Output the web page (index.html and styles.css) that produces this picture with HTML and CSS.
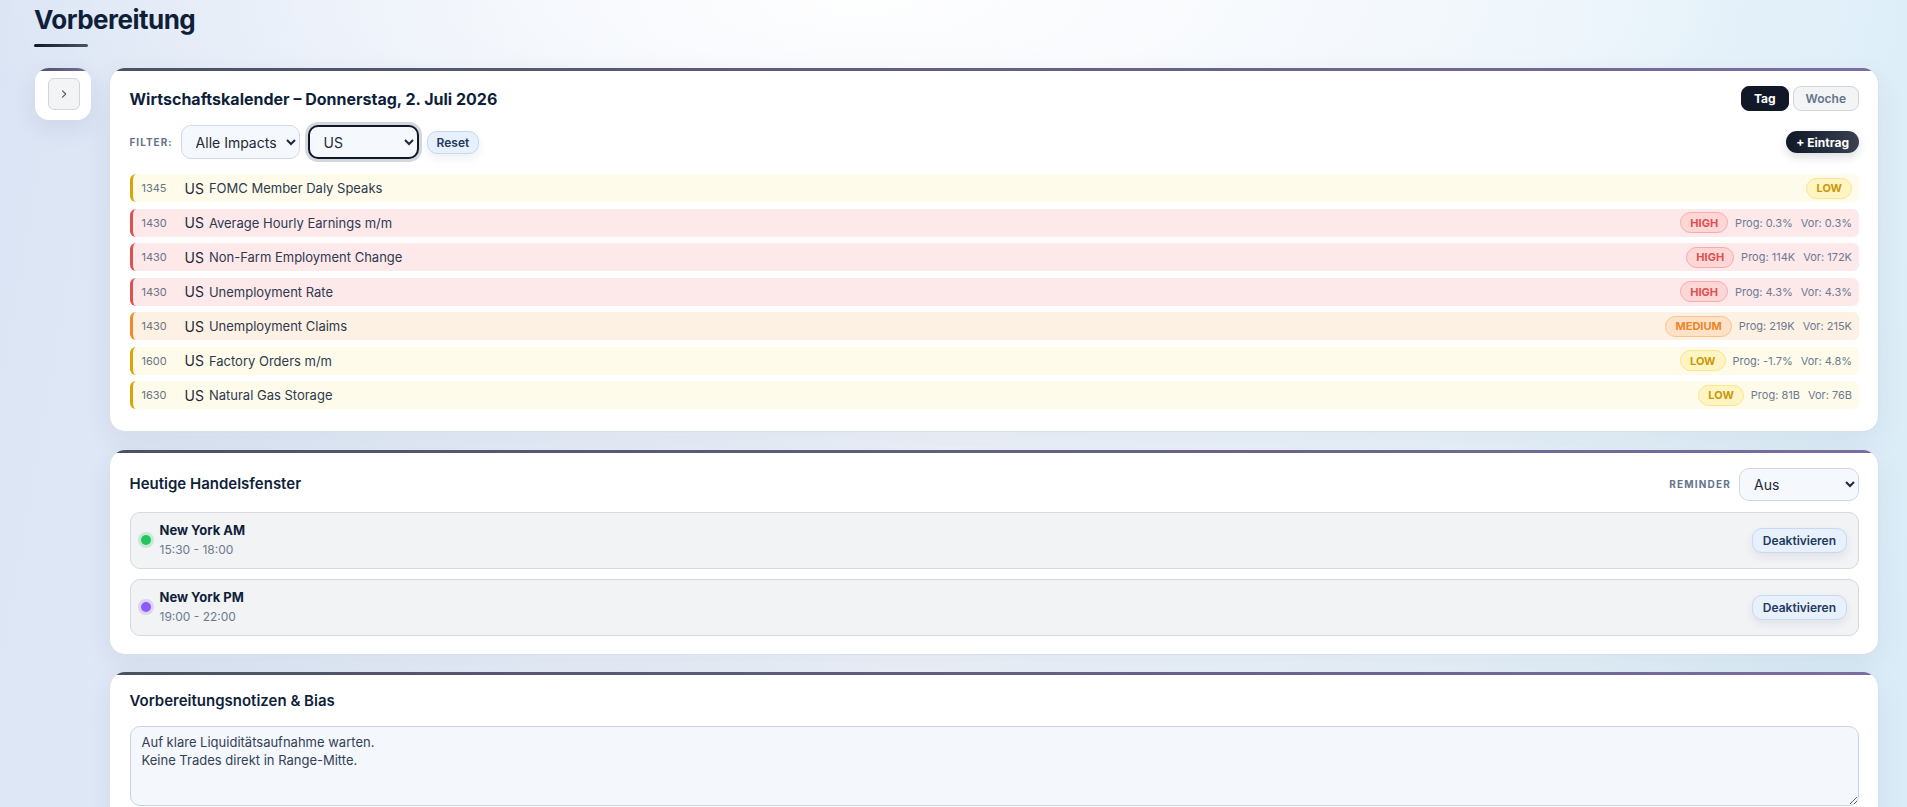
FILE: index.html
```html
<!DOCTYPE html>
<html lang="de">
<head>
<meta charset="utf-8">
<title>Vorbereitung</title>
<link rel="stylesheet" href="styles.css">
</head>
<body>
<div class="page">
  <header class="page-head">
    <h1 class="page-title">Vorbereitung</h1>
    <div class="title-bar"></div>
  </header>

  <div class="layout">
    <aside class="side-card">
      <button class="side-btn" aria-label="Ausklappen">
        <svg width="10" height="10" viewBox="0 0 10 10"><path d="M3.5 1.8 L6.7 5 L3.5 8.2" fill="none" stroke="#4b5563" stroke-width="1.1" stroke-linecap="round" stroke-linejoin="round"/></svg>
      </button>
    </aside>

    <main class="main">
      <section class="card">
        <div class="card-head">
          <h2 class="card-title bold">Wirtschaftskalender – Donnerstag, 2. Juli 2026</h2>
          <div class="seg">
            <button class="seg-btn active">Tag</button>
            <button class="seg-btn">Woche</button>
          </div>
        </div>

        <div class="filter-row">
          <span class="mini-label">FILTER:</span>
          <select class="sel sel-impact"><option>Alle Impacts</option></select>
          <select class="sel sel-country focused"><option>US</option></select>
          <button class="soft-btn reset">Reset</button>
          <button class="dark-btn">+ Eintrag</button>
        </div>

        <div class="events">
          <div class="ev low">
            <span class="ev-time">1345</span><span class="ev-cc">US</span><span class="ev-name">FOMC Member Daly Speaks</span>
            <span class="ev-right"><span class="badge b-low">LOW</span></span>
          </div>
          <div class="ev high">
            <span class="ev-time">1430</span><span class="ev-cc">US</span><span class="ev-name">Average Hourly Earnings m/m</span>
            <span class="ev-right"><span class="badge b-high">HIGH</span><span class="ev-val">Prog: 0.3%</span><span class="ev-val">Vor: 0.3%</span></span>
          </div>
          <div class="ev high">
            <span class="ev-time">1430</span><span class="ev-cc">US</span><span class="ev-name">Non-Farm Employment Change</span>
            <span class="ev-right"><span class="badge b-high">HIGH</span><span class="ev-val">Prog: 114K</span><span class="ev-val">Vor: 172K</span></span>
          </div>
          <div class="ev high">
            <span class="ev-time">1430</span><span class="ev-cc">US</span><span class="ev-name">Unemployment Rate</span>
            <span class="ev-right"><span class="badge b-high">HIGH</span><span class="ev-val">Prog: 4.3%</span><span class="ev-val">Vor: 4.3%</span></span>
          </div>
          <div class="ev medium">
            <span class="ev-time">1430</span><span class="ev-cc">US</span><span class="ev-name">Unemployment Claims</span>
            <span class="ev-right"><span class="badge b-med">MEDIUM</span><span class="ev-val">Prog: 219K</span><span class="ev-val">Vor: 215K</span></span>
          </div>
          <div class="ev low">
            <span class="ev-time">1600</span><span class="ev-cc">US</span><span class="ev-name">Factory Orders m/m</span>
            <span class="ev-right"><span class="badge b-low">LOW</span><span class="ev-val">Prog: -1.7%</span><span class="ev-val">Vor: 4.8%</span></span>
          </div>
          <div class="ev low">
            <span class="ev-time">1630</span><span class="ev-cc">US</span><span class="ev-name">Natural Gas Storage</span>
            <span class="ev-right"><span class="badge b-low">LOW</span><span class="ev-val">Prog: 81B</span><span class="ev-val">Vor: 76B</span></span>
          </div>
        </div>
      </section>

      <section class="card">
        <div class="card-head">
          <h2 class="card-title">Heutige Handelsfenster</h2>
          <div class="reminder">
            <span class="mini-label wide">REMINDER</span>
            <select class="sel sel-reminder"><option>Aus</option></select>
          </div>
        </div>
        <div class="windows">
          <div class="win">
            <span class="dot green"></span>
            <div class="win-text">
              <div class="win-name">New York AM</div>
              <div class="win-time">15:30 - 18:00</div>
            </div>
            <button class="soft-btn deact">Deaktivieren</button>
          </div>
          <div class="win">
            <span class="dot purple"></span>
            <div class="win-text">
              <div class="win-name">New York PM</div>
              <div class="win-time">19:00 - 22:00</div>
            </div>
            <button class="soft-btn deact">Deaktivieren</button>
          </div>
        </div>
      </section>

      <section class="card">
        <h2 class="card-title">Vorbereitungsnotizen &amp; Bias</h2>
        <textarea class="notes">Auf klare Liquiditätsaufnahme warten.
Keine Trades direkt in Range-Mitte.</textarea>
      </section>
    </main>
  </div>
</div>
</body>
</html>
```

FILE: styles.css
```css
* { box-sizing: border-box; }

html, body { height: 100%; }

body {
  margin: 0;
  font-family: Inter, "Noto Sans", "Liberation Sans", sans-serif;
  color: #0f1f3a;
  background:
    radial-gradient(ellipse 900px 260px at 45% 0%, rgba(255,255,255,0.95) 0%, rgba(255,255,255,0) 100%),
    linear-gradient(100deg, #dae4f4 0%, #e7eef9 28%, #f0f4fb 50%, #ebf4fb 75%, #d9ecf7 100%);
  overflow: hidden;
}

.page {
  padding: 3px 28px 0 34px;
}

.page-title {
  margin: 0;
  font-size: 26px;
  line-height: 34px;
  font-weight: 700;
  letter-spacing: -0.02em;
  color: #0f1f3a;
}

.title-bar {
  width: 54px;
  height: 3px;
  margin-top: 7px;
  border-radius: 2px;
  background: linear-gradient(90deg, #111827, #4b5563);
}

.layout {
  display: flex;
  align-items: flex-start;
  gap: 18px;
  margin-top: 21px;
}

.side-card {
  position: relative;
  width: 56px;
  margin-left: 1px;
  padding: 10px 11px 10px 13px;
  background: #fff;
  border-radius: 14px;
  overflow: hidden;
  box-shadow: 0 8px 24px rgba(30, 41, 80, 0.08);
}
.side-card::before,
.card::before {
  content: "";
  position: absolute;
  top: 0; left: 0; right: 0;
  height: 3px;
  background: linear-gradient(90deg, #4b5160, #7a6da3);
}

.side-btn {
  display: flex;
  align-items: center;
  justify-content: center;
  width: 32px;
  height: 32px;
  padding: 0;
  background: #f3f4f6;
  border: 1px solid #d1d5db;
  border-radius: 6px;
}

.main {
  flex: 1;
  min-width: 0;
  display: flex;
  flex-direction: column;
  gap: 17.5px;
}

.card {
  position: relative;
  background: #fff;
  border: 1px solid #d9dfe8;
  border-top: 0;
  border-radius: 16px;
  padding: 18px 19px 18px 19.5px;
  overflow: hidden;
  box-shadow: 0 10px 30px rgba(30, 41, 80, 0.07);
}

.card-head {
  display: flex;
  align-items: center;
  justify-content: space-between;
}

.card-title {
  margin: 0;
  font-size: 15px;
  line-height: 22px;
  font-weight: 600;
  color: #0f1f3a;
}
.card-title.bold { font-weight: 700; font-size: 16px; }

.seg { display: flex; gap: 4px; }
.seg-btn {
  height: 25px;
  padding: 0 12px;
  font-family: inherit;
  font-size: 12px;
  font-weight: 600;
  color: #64748b;
  background: #f3f4f6;
  border: 1px solid #d1d5db;
  border-radius: 8px;
}
.seg-btn.active {
  color: #fff;
  background: #111827;
  border-color: #111827;
  font-weight: 700;
}

.filter-row {
  display: flex;
  align-items: center;
  gap: 8px;
  margin-top: 14px;
}

.mini-label {
  font-size: 10px;
  font-weight: 700;
  letter-spacing: 0.1em;
  color: #64748b;
}
.mini-label.wide { letter-spacing: 0.12em; }

.sel {
  height: 34px;
  font-family: inherit;
  font-size: 14px;
  color: #1e293b;
  background: #f5f8fd;
  border: 1px solid #cfd8e4;
  border-radius: 10px;
  padding: 0 6px 0 10px;
}
.sel-impact { width: 119px; }
.sel-country { width: 111px; }
.sel.focused {
  border: 2px solid #111827;
  box-shadow: 0 0 0 3px #d4d7dc;
}

.soft-btn {
  font-family: inherit;
  font-size: 12px;
  font-weight: 600;
  color: #1e3a5f;
  background: #e7f0fb;
  border: 1px solid #c4daf3;
  border-radius: 10px;
  box-shadow: 0 4px 10px rgba(30, 41, 80, 0.08);
}
.reset {
  height: 23px;
  padding: 0 9px;
}

.dark-btn {
  margin-left: auto;
  height: 22px;
  padding: 0 10px;
  font-family: inherit;
  font-size: 12px;
  font-weight: 700;
  color: #fff;
  background: linear-gradient(90deg, #111827, #374151);
  border: 0;
  border-radius: 11px;
  box-shadow: 0 4px 10px rgba(17, 24, 39, 0.15);
}

.events {
  display: flex;
  flex-direction: column;
  gap: 6.5px;
  margin-top: 15px;
  margin-bottom: 4px;
}

.ev {
  display: flex;
  align-items: center;
  height: 28px;
  padding: 0 7px 0 9px;
  border-left: 3px solid;
  border-radius: 6px;
}
.ev.low { background: #fefbea; border-left-color: #d9a406; }
.ev.high { background: #fde9ea; border-left-color: #e05050; }
.ev.medium { background: #fdf1e4; border-left-color: #f0892a; }

.ev-time {
  width: 43px;
  flex: none;
  font-size: 11px;
  color: #6b7280;
}
.ev-cc {
  font-size: 14px;
  color: #1e293b;
  margin-right: 5px;
}
.ev-name {
  flex: 1;
  font-size: 13px;
  color: #2d3a4f;
}
.ev-right {
  display: flex;
  align-items: center;
  gap: 7px;
}
.ev-val {
  font-size: 11px;
  color: #6b7a90;
}
.ev-val + .ev-val { margin-left: 1px; }

.badge {
  display: inline-flex;
  align-items: center;
  height: 21px;
  padding: 0 9px;
  font-size: 11px;
  font-weight: 700;
  border-radius: 11px;
  border: 1px solid;
}
.b-low { background: #fef5c2; border-color: #fbe58d; color: #c9980a; }
.b-high { background: #fdd6d6; border-color: #f7abab; color: #de4f4f; }
.b-med { background: #fde2c8; border-color: #f8c28e; color: #ee8428; }

.reminder {
  display: flex;
  align-items: center;
  gap: 8px;
}
.sel-reminder { width: 120px; height: 33px; }

.windows {
  display: flex;
  flex-direction: column;
  gap: 10px;
  margin-top: 11px;
}

.win {
  display: flex;
  align-items: center;
  height: 57px;
  padding: 0 11px 0 10px;
  background: #f2f3f5;
  border: 1px solid #d4d8df;
  border-radius: 10px;
}
.dot {
  width: 10px;
  height: 10px;
  border-radius: 50%;
  margin-right: 9px;
  flex: none;
}
.dot.green { background: #22c55e; box-shadow: 0 0 0 3px rgba(34, 197, 94, 0.2); }
.dot.purple { background: #8b5cf6; box-shadow: 0 0 0 3px rgba(139, 92, 246, 0.2); }

.win-text { flex: 1; }
.win-name {
  font-size: 13px;
  line-height: 18px;
  font-weight: 700;
  color: #0f1f3a;
}
.win-time {
  margin-top: 2px;
  font-size: 12px;
  line-height: 18px;
  color: #6b7a90;
}
.deact {
  height: 25px;
  padding: 0 10px;
}

.notes {
  display: block;
  width: 100%;
  height: 80px;
  margin-top: 14px;
  padding: 6px 11px;
  font-family: inherit;
  font-size: 13px;
  line-height: 18px;
  color: #334155;
  background: #f4f7fc;
  border: 1px solid #cbd3de;
  border-radius: 10px;
}
```
